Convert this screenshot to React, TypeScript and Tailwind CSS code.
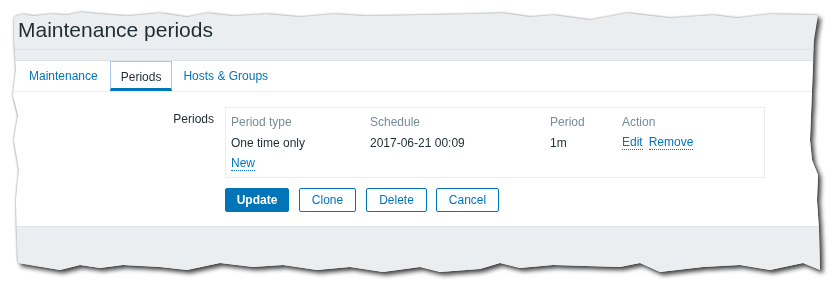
import React from "react";

const font = { fontFamily: '"Liberation Sans", Arial, sans-serif' };

export default function App() {
  return (
    <div className="w-[839px] h-[291px] bg-white overflow-hidden" style={font}>
      <div className="[filter:drop-shadow(0_0_1px_rgba(0,0,0,0.4))_drop-shadow(3px_3px_2px_rgba(0,0,0,0.7))]">
        <div className="w-[839px] h-[291px] flex flex-col bg-[#ebeef0] [clip-path:polygon(14px_17px,22px_14px,33px_16px,50px_14px,67px_15px,80px_12px,100px_14px,127px_16px,160px_13px,187px_17px,207px_13px,233px_16px,267px_14px,300px_17px,333px_14px,367px_16px,420px_15px,470px_14px,503px_13px,530px_17px,553px_15px,590px_20px,627px_13px,670px_18px,713px_15px,737px_18px,770px_14px,818px_15px,814px_40px,812px_90px,810px_140px,812px_160px,818px_175px,817px_200px,819px_230px,820px_270px,803px_263px,770px_270px,740px_265px,703px_267px,660px_272px,640px_263px,620px_267px,553px_265px,520px_268px,500px_263px,480px_269px,440px_272px,420px_267px,383px_272px,350px_267px,317px_270px,283px_265px,253px_267px,220px_263px,187px_270px,160px_267px,123px_265px,100px_268px,80px_265px,60px_270px,18px_263px,17px_240px,16px_200px,19px_170px,14px_140px,18px_115px,13px_95px,16px_70px,14px_40px)]">
          {/* Header */}
          <div className="h-[50px] border-b border-[#dde2e5] pl-[18px] pt-[18px]">
            <h1 className="text-[21px] leading-[24px] text-[#1f2c33] font-normal">Maintenance periods</h1>
          </div>
          <div className="h-[11px] border-b border-[#dde2e5]" />
          {/* Tabs */}
          <div className="bg-white">
            <div className="flex h-[31px] border-b border-[#ebeef0] pl-[18px] text-[12px]">
              <div className="flex items-center pl-[11px] pr-[12px] pt-[3px] pb-[3px] text-[#0275b8]">Maintenance</div>
              <div className="flex items-center px-[10px] pt-[3px] border border-b-[3px] border-[#a8c8ec] border-b-[#0275b8] text-[#1f2c33]">Periods</div>
              <div className="flex items-center px-[11px] pt-[3px] pb-[3px] text-[#0275b8]">Hosts &amp; Groups</div>
            </div>
            {/* Form */}
            <div className="flex pt-[15px] pb-[14px] border-b border-[#dde2e5] text-[12px] text-[#1f2c33]">
              <div className="w-[197px] ml-[18px] text-right pr-[1px] pt-[5px] leading-[14px]">Periods</div>
              <div className="ml-[10px] flex flex-col">
                <div className="w-[540px] border border-[#ebeef0] pl-[5px] pt-[3px] pb-[3px]">
                  <div className="grid grid-cols-[139px_180px_72px_1fr] h-[21px] items-center text-[#768d99]">
                    <div>Period type</div>
                    <div>Schedule</div>
                    <div>Period</div>
                    <div>Action</div>
                  </div>
                  <div className="grid grid-cols-[139px_180px_72px_1fr] h-[21px] items-center">
                    <div>One time only</div>
                    <div>2017-06-21 00:09</div>
                    <div>1m</div>
                    <div className="flex items-center">
                      <span className="text-[#0275b8] border-b border-dotted border-[#0275b8] leading-[13px]">Edit</span>
                      <span className="ml-[6px] text-[#0275b8] border-b border-dotted border-[#0275b8] leading-[13px]">Remove</span>
                    </div>
                  </div>
                  <div className="h-[21px] flex items-center">
                    <span className="text-[#0275b8] border-b border-dotted border-[#0275b8] leading-[13px]">New</span>
                  </div>
                </div>
                <div className="flex mt-[10px]">
                  <button className="w-[64px] h-[24px] rounded-[2px] bg-[#0275b8] border border-[#0275b8] text-white font-bold text-[12px]">Update</button>
                  <button className="ml-[10px] w-[57px] h-[24px] rounded-[2px] bg-white border border-[#0275b8] text-[#0275b8] text-[12px]">Clone</button>
                  <button className="ml-[10px] w-[61px] h-[24px] rounded-[2px] bg-white border border-[#0275b8] text-[#0275b8] text-[12px]">Delete</button>
                  <button className="ml-[9px] w-[63px] h-[24px] rounded-[2px] bg-white border border-[#0275b8] text-[#0275b8] text-[12px]">Cancel</button>
                </div>
              </div>
            </div>
          </div>
          <div className="flex-1 bg-[#ebeef0]" />
        </div>
      </div>
    </div>
  );
}
